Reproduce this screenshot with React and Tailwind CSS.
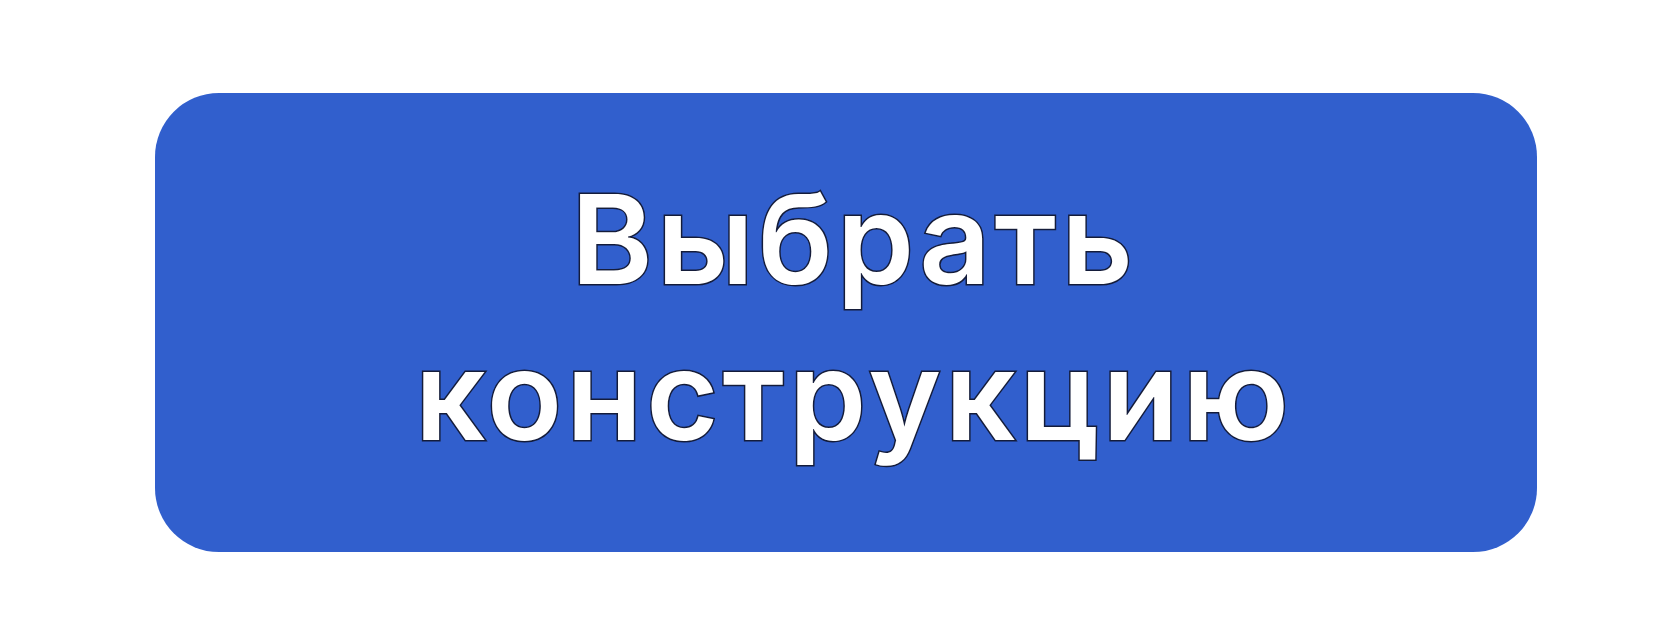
export default function App() {
  return (
    <div className="w-[1678px] h-[624px] bg-white pl-[155px] pt-[93px]">
      <button
        type="button"
        className="w-[1382px] h-[459px] rounded-[64px] bg-[#315fcd] flex flex-col items-center justify-center pl-[16px] pb-[12px]"
      >
        <span
          className="block text-white text-[124px] leading-[156px] font-semibold tracking-[4px] [-webkit-text-stroke:3px_#141c3a] [paint-order:stroke_fill] text-center"
          style={{ fontFamily: 'Inter, "Noto Sans", sans-serif' }}
        >
          Выбрать
          <br />
          конструкцию
        </span>
      </button>
    </div>
  );
}
